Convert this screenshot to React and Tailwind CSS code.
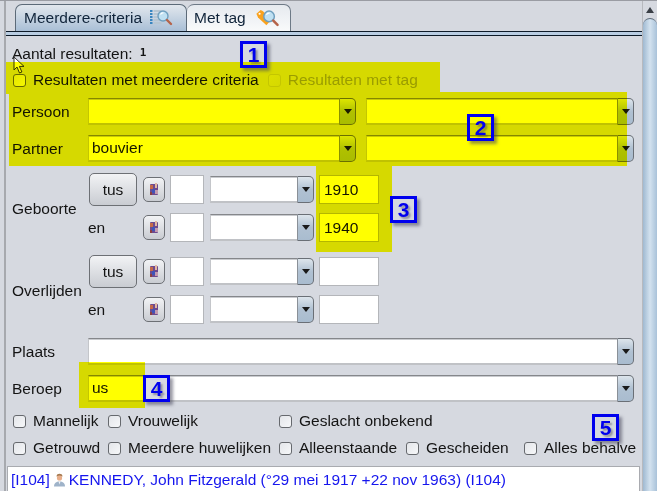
const Arrow = () => (
  <svg width="8" height="5" viewBox="0 0 8 5"><path d="M0 0H8L4 5Z" fill="#1a1a1a" /></svg>
);

const Combo = ({ value = "", className = "", yellow = false }) => (
  <div className={`flex h-[27px] ${className}`}>
    <div className={`flex-1 min-w-0 pl-[3px] leading-[24px] border-t border-l border-b-2 border-t-[#85878b] border-l-[#c4c6ca] border-b-[#c0c2c6] shadow-[inset_0_1px_0_#c9cbcf] ${yellow ? "bg-[#ffff00]" : "bg-white"}`}>
      {value}
    </div>
    <div className="w-[17px] flex items-center justify-center rounded-r-[5px] border border-[#6a6f76] border-l-[#8a9097] bg-gradient-to-b from-[#dde5ec] via-[#b0c1d2] to-[#a9bccf]">
      <Arrow />
    </div>
  </div>
);

const Check = ({ disabled = false }) => (
  <span className={`inline-block w-[13px] h-[13px] rounded-[3px] border shrink-0 bg-gradient-to-br ${disabled ? "border-[#c4c6ca] from-[#dcdfe4] to-[#d6d9df]" : "border-[#66696e] from-[#e4e6ea] to-[#f6f7f9]"}`} />
);

const CheckItem = ({ label, className = "" }) => (
  <div className={`flex items-center gap-[7px] whitespace-nowrap ${className}`}>
    <Check />
    <span>{label}</span>
  </div>
);

const CalIcon = () => (
  <svg width="8" height="13" viewBox="0 0 8 13">
    <rect x="0" y="1" width="8" height="11" rx="1" fill="#6d4a8e" />
    <rect x="0" y="2" width="3" height="4" fill="#c56a4a" />
    <rect x="5" y="0" width="2" height="5" fill="#e4b7a2" />
    <rect x="2" y="6" width="3" height="4" fill="#3f54b8" />
    <rect x="5" y="7" width="3" height="4" fill="#c49ab0" />
    <rect x="0" y="9" width="2" height="3" fill="#8c3f3f" />
  </svg>
);

const DateRow = ({ first, year }) => (
  <div className={`flex items-center ${first ? "h-[33px]" : "h-[29px]"}`}>
    <div className="w-[48px] shrink-0">
      {first ? (
        <div className="ml-[1px] w-[48px] h-[33px] flex items-center justify-center rounded-[5px] border border-[#6d7075] bg-gradient-to-b from-[#f2f3f5] to-[#c9ccd2]">
          tus
        </div>
      ) : (
        <span>en</span>
      )}
    </div>
    <div className="ml-[7px] w-[22px] h-[25px] flex items-center justify-center rounded-[5px] border border-[#6d7075] bg-gradient-to-b from-[#f2f3f5] to-[#c9ccd2]">
      <CalIcon />
    </div>
    <div className="ml-[5px] w-[34px] h-[29px] bg-white border border-[#b4b6ba]" />
    <Combo className="ml-[6px] w-[104px]" />
    <div className="ml-[5px] w-[60px] h-[29px] pl-[4px] leading-[27px] bg-white border border-[#b4b6ba]">{year}</div>
  </div>
);

const DateGroup = ({ label, y1 = "", y2 = "" }) => (
  <div className="flex items-center">
    <div className="w-[82px] pl-[6px] pt-[2px]">{label}</div>
    <div className="flex flex-col gap-[7px]">
      <DateRow first year={y1} />
      <DateRow year={y2} />
    </div>
  </div>
);

const Badge = ({ n, className }) => (
  <div className={`absolute z-30 w-[27px] h-[27px] flex items-center justify-center border-[3px] border-[#0000ee] text-[#0000ee] font-bold text-[21px] leading-none shadow-[3px_3px_3px_rgba(70,70,90,0.55)] [text-shadow:2px_2px_2px_rgba(70,70,90,0.5)] ${className}`}>
    {n}
  </div>
);

const Hl = ({ className }) => (
  <div className={`absolute z-20 bg-[#ffff00] mix-blend-multiply pointer-events-none ${className}`} />
);

const Glass = () => (
  <>
    <circle cx="13" cy="7" r="5" fill="#bfe0f2" stroke="#6f9fbe" strokeWidth="1.4" />
    <path d="M10.5 5.5a3 3 0 0 1 3-1.5" stroke="#fff" strokeWidth="1.2" fill="none" />
    <path d="M17 11l4 4" stroke="#b5634a" strokeWidth="2.4" strokeLinecap="round" />
  </>
);

const ListSearchIcon = () => (
  <svg width="23" height="18" viewBox="0 0 23 18">
    {[1, 4, 7, 10, 13].map((y) => (
      <g key={y}>
        <rect x="0" y={y} width="2.5" height="2" fill="#3a86c0" />
        <rect x="3.5" y={y} width="8" height="2" fill="#b7c6d2" />
      </g>
    ))}
    <Glass />
  </svg>
);

const TagSearchIcon = () => (
  <svg width="25" height="19" viewBox="0 0 23 18">
    <path d="M1 4.5 5 1l2 1 8 8-4.5 5.5L2.5 8Z" fill="#f9a21e" />
    <circle cx="4" cy="4.5" r="1" fill="#fff" />
    <Glass />
  </svg>
);

const PersonIcon = () => (
  <svg width="13" height="14" viewBox="0 0 13 14" className="mx-[3px] shrink-0">
    <path d="M3.5 3.5C3.5 1.5 5 .8 6.5.8s3 .7 3 2.7Z" fill="#a77a50" />
    <circle cx="6.5" cy="5" r="2.6" fill="#e8ae8a" />
    <path d="M1 13.5c0-3.4 2.2-5 5.5-5s5.5 1.6 5.5 5Z" fill="#9fb3c9" />
    <path d="M5.5 8.5h2l-1 3Z" fill="#f1f3f6" />
  </svg>
);

const Cursor = () => (
  <svg width="12" height="19" viewBox="0 0 12 19" className="absolute z-10 left-[7px] top-[20px]">
    <path d="M1 1v13l3-3 2.5 6 2.4-1-2.5-5.6H11Z" fill="#fff" stroke="#333" strokeWidth="1" strokeLinejoin="round" />
  </svg>
);

export default function App() {
  return (
    <div className="relative w-[657px] h-[491px] overflow-hidden flex bg-[#d6d9e0] text-[15.5px] text-[#141414] border-t border-[#9a9ca3] pl-[4px] font-['Liberation_Sans',Arial,sans-serif]">
      <div className="flex-1 min-w-0 border-l-2 border-[#a7a9ae] flex flex-col">
        {/* tabs */}
        <div className="h-[30px] pt-[3px] pl-[9px] flex items-stretch">
          <div className="w-[172px] flex items-center gap-[8px] pl-[8px] rounded-t-[7px] border border-b-0 border-[#5c6a78] bg-gradient-to-b from-[#e2e7ed] to-[#a9bfd6] text-[#10243a]">
            <span>Meerdere-criteria</span>
            <ListSearchIcon />
          </div>
          <div className="w-[104px] flex items-center gap-[9px] pl-[7px] rounded-t-[7px] border border-b-0 border-l-0 border-[#6d7986] bg-gradient-to-b from-[#e6eaef] to-[#f9fafb] text-[#10243a]">
            <span>Met tag</span>
            <TagSearchIcon />
          </div>
        </div>
        <div className="h-[5px] bg-[#b9cde2] border-y border-[#0d1a28]" />

        {/* form */}
        <div className="relative flex flex-col flex-1 min-h-0">
          <Cursor />
          <div className="pl-[6px] pt-[9px] h-[26px] flex items-center whitespace-nowrap">
            <span>Aantal resultaten:</span>
            <span className="ml-[7px] text-[11px] font-bold font-['DejaVu_Sans_Mono',monospace]">1</span>
          </div>
          <div className="mt-[10px] pl-[7px] h-[16px] flex items-center whitespace-nowrap">
            <CheckItem label="Resultaten met meerdere criteria" />
            <div className="ml-[9px] flex items-center gap-[7px] text-[#9a9c9f]">
              <Check disabled />
              <span>Resultaten met tag</span>
            </div>
          </div>

          <div className="mt-[10px] pl-[6px] pr-[8px] flex items-center h-[27px]">
            <div className="w-[76px]">Persoon</div>
            <Combo className="w-[268px]" yellow />
            <Combo className="ml-[10px] w-[268px]" yellow />
          </div>
          <div className="mt-[10px] pl-[6px] pr-[8px] flex items-center h-[27px]">
            <div className="w-[76px]">Partner</div>
            <Combo className="w-[268px]" value="bouvier" yellow />
            <Combo className="ml-[10px] w-[268px]" yellow />
          </div>

          <div className="mt-[11px] flex flex-col gap-[13px]">
            <DateGroup label="Geboorte" y1="1910" y2="1940" />
            <DateGroup label="Overlijden" />
          </div>

          <div className="mt-[14px] pl-[6px] flex items-center h-[27px]">
            <div className="w-[76px]">Plaats</div>
            <Combo className="w-[546px]" />
          </div>
          <div className="mt-[10px] pl-[6px] flex items-center h-[27px]">
            <div className="w-[76px]">Beroep</div>
            <Combo className="w-[546px]" value="us" />
          </div>

          <div className="mt-[11px] pl-[7px] h-[16px] flex items-center">
            <CheckItem className="w-[95px]" label="Mannelijk" />
            <CheckItem className="w-[171px]" label="Vrouwelijk" />
            <CheckItem label="Geslacht onbekend" />
          </div>
          <div className="mt-[11px] pl-[7px] h-[16px] flex items-center">
            <CheckItem className="w-[95px]" label="Getrouwd" />
            <CheckItem className="w-[171px]" label="Meerdere huwelijken" />
            <CheckItem className="w-[127px]" label="Alleenstaande" />
            <CheckItem className="w-[118px]" label="Gescheiden" />
            <CheckItem label="Alles behalve" />
          </div>

          <div className="mt-[10px] ml-[1px] mr-[2px] flex-1 bg-white border border-[#a9abb0] pl-[3px] pt-[1px] flex items-center h-[26px] text-[#1616ee] whitespace-nowrap">
            <span>[I104]</span>
            <PersonIcon />
            <span>KENNEDY, John Fitzgerald (°29 mei 1917 +22 nov 1963) (I104)</span>
          </div>
        </div>
      </div>

      {/* scrollbar */}
      <div className="w-[15px] shrink-0 flex flex-col border-l border-[#b7b9be] bg-[#d6d9e0]">
        <div className="h-[17px] flex items-center justify-center">
          <svg width="8" height="6" viewBox="0 0 8 6"><path d="M4 0 8 6H0Z" fill="#3a3f46" /></svg>
        </div>
        <div className="flex-1 rounded-t-[8px] border-t border-[#5d6b79] bg-gradient-to-r from-[#9fb9d1] via-[#d3e2ef] to-[#a9c2d9]" />
      </div>

      {/* highlights */}
      <Hl className="left-[6px] top-[61px] w-[434px] h-[32px]" />
      <Hl className="left-[9px] top-[91px] w-[618px] h-[74px]" />
      <Hl className="left-[316px] top-[165px] w-[76px] h-[86px]" />
      <Hl className="left-[79px] top-[361px] w-[66px] h-[46px]" />

      <Badge n="1" className="left-[240px] top-[40px]" />
      <Badge n="2" className="left-[467px] top-[113px]" />
      <Badge n="3" className="left-[390px] top-[195px]" />
      <Badge n="4" className="left-[143px] top-[374px] bg-[#d6d9e0]" />
      <Badge n="5" className="left-[592px] top-[413px]" />
    </div>
  );
}
